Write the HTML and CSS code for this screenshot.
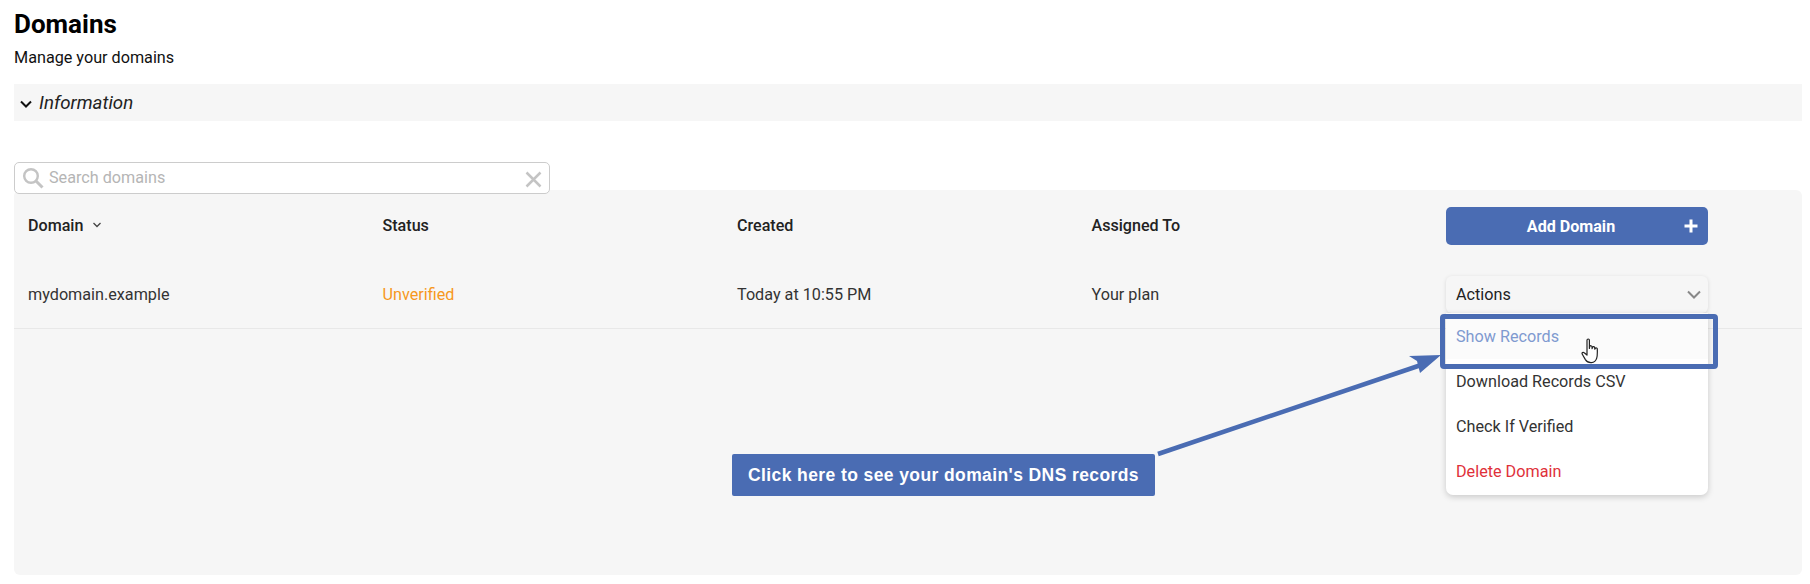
FILE: index.html
```html
<!DOCTYPE html>
<html lang="en">
<head>
<meta charset="utf-8">
<title>Domains</title>
<link rel="stylesheet" href="styles.css">
</head>
<body>
<header class="head">
  <h1 class="title">Domains</h1>
  <p class="sub">Manage your domains</p>
</header>
<div class="info">
  <svg class="info-chev" viewBox="0 0 14 10" width="14" height="10"><path d="M2 2.5 7 7.5 12 2.5" fill="none" stroke="#111" stroke-width="2"/></svg>
  <span>Information</span>
</div>
<div class="search">
  <svg class="search-ico" viewBox="0 0 22 22" width="22" height="22"><circle cx="9" cy="9" r="6.8" fill="none" stroke="#c4c4c4" stroke-width="2.4"/><path d="M14 14 20.5 20.5" stroke="#c4c4c4" stroke-width="3"/></svg>
  <span class="search-ph">Search domains</span>
  <svg class="search-x" viewBox="0 0 17 17" width="17" height="17"><path d="M1.500 1.500 15.500 15.500M15.500 1.500 1.500 15.500" stroke="#c4c4c4" stroke-width="2.500"/></svg>
</div>
<main class="panel">
  <div class="row row-head">
    <div class="cell cell-sort">Domain
      <svg class="sort" viewBox="0 0 10 6" width="10" height="6"><path d="M1.500 1 5 4.500 8.500 1" fill="none" stroke="#444" stroke-width="1.300"/></svg>
    </div>
    <div class="cell">Status</div>
    <div class="cell">Created</div>
    <div class="cell">Assigned To</div>
    <div class="cell cell-act">
      <div class="btn-add"><span class="btn-label">Add Domain</span>
        <svg viewBox="0 0 14 14" width="14" height="14"><path d="M7 .5V13.500M.5 7H13.500" stroke="#fff" stroke-width="3"/></svg>
      </div>
    </div>
  </div>
  <div class="row row-body">
    <div class="cell">mydomain.example</div>
    <div class="cell unverified">Unverified</div>
    <div class="cell">Today at 10:55 PM</div>
    <div class="cell">Your plan</div>
    <div class="cell cell-act">
      <div class="actions"><span>Actions</span>
        <svg viewBox="0 0 14 9" width="14" height="9"><path d="M1 1.500 7 7.500 13 1.500" fill="none" stroke="#888" stroke-width="2"/></svg>
      </div>
      <ul class="menu">
        <li class="item item-hover">Show Records</li>
        <li class="item">Download Records CSV</li>
        <li class="item">Check If Verified</li>
        <li class="item item-del">Delete Domain</li>
      </ul>
    </div>
  </div>
  <div class="highlight"></div>
  <svg class="cursor" viewBox="0 0 20 27" width="20" height="27"><path d="M6 2.200c0-1.600 2.400-1.600 2.400 0v8.300l.3-1.900c.3-1.300 2.200-1.100 2.300.2l.1 1.800.4-1.300c.4-1.200 2.100-.9 2.200.3l.1 1.600.5-.8c.6-.9 2-.5 2 .7 0 3.200.3 6.300-.6 9-.7 2.400-2.500 4.300-5.300 4.500-2.700.2-4.600-.8-6-3L1.300 16.200c-.8-1.300.8-2.500 1.900-1.500L6 17Z" fill="#fff" stroke="#222" stroke-width="1.200" stroke-linejoin="round"/></svg>
  <svg class="arrow" viewBox="0 0 290 110" width="290" height="110"><path d="M1 103 270 12" stroke="#4a6cb3" stroke-width="4.500" fill="none"/><path d="M284 4 252 5 260 10 263 22Z" fill="#4a6cb3"/></svg>
  <div class="callout">Click here to see your domain's DNS records</div>
</main>
</body>
</html>
```
FILE: styles.css
```css
* { box-sizing: border-box; }
html, body { margin: 0; padding: 0; }
body {
  width: 1810px;
  height: 584px;
  overflow: hidden;
  padding: 8px 8px 0 14px;
  background: #fff;
  color: #111;
  font-family: Roboto, "Liberation Sans", sans-serif;
  font-size: 16.2px;
}
.title { margin: 0; font-size: 26px; line-height: 32px; font-weight: 700; color: #000; }
.sub { margin: 8px 0 0; font-size: 16.2px; line-height: 20px; color: #111; }
.info {
  margin-top: 16px;
  height: 37px;
  background: #f6f6f6;
  display: flex;
  align-items: center;
  gap: 6px;
  padding-left: 5px;
  font-style: italic;
  font-size: 18.7px;
  color: #222;
}
.info-chev { margin-top: 3px; }
.search {
  position: relative;
  z-index: 2;
  margin-top: 41px;
  width: 536px;
  height: 32px;
  border: 1.5px solid #ccc;
  border-radius: 5px;
  background: #fff;
  display: flex;
  align-items: center;
  padding: 0 7px 0 7px;
  gap: 5px;
}
.search-ico { flex: none; }
.search-ph { flex: 1; font-size: 16.2px; color: #b5b5b5; padding-bottom: 2px; }
.search-x { margin-top: 2px; }
.panel {
  position: relative;
  margin-top: -4px;
  width: 1788px;
  height: 385px;
  background: #f6f6f6;
  border-radius: 6px;
}
.row {
  display: grid;
  grid-template-columns: repeat(4, 354.5px) 1fr;
  align-items: center;
}
.row-head { height: 70px; font-weight: 500; font-size: 16.1px; color: #222; }
.row-body { height: 69px; border-bottom: 1px solid #e8e8e8; color: #333; padding-top: 1px; }
.cell { padding-left: 14px; }
.cell-sort { display: flex; align-items: center; gap: 9px; }
.cell-act { position: relative; }
.unverified { color: #f7981d; }
.btn-add {
  width: 262px;
  height: 38px;
  margin-top: 2px;
  background: #4a6cb3;
  border-radius: 5px;
  color: #fff;
  font-weight: 700;
  display: flex;
  align-items: center;
  padding: 0 10px 0 0;
}
.btn-label { flex: 1; text-align: center; padding-left: 12px; }
.actions {
  width: 262px;
  height: 37px;
  border-radius: 6px;
  background: #f6f6f6;
  box-shadow: 0 1px 4px rgba(0,0,0,.12);
  display: flex;
  align-items: center;
  justify-content: space-between;
  padding: 0 7px 0 10px;
  color: #222;
}
.menu {
  position: absolute;
  z-index: 3;
  left: 14px;
  top: 37px;
  width: 262px;
  height: 182px;
  margin: 0;
  padding: 0;
  list-style: none;
  background: #fff;
  border-radius: 0 0 7px 7px;
  box-shadow: 0 2px 6px rgba(0,0,0,.18);
}
.item { height: 45px; padding-left: 10px; line-height: 45px; color: #333; }
.item-hover { height: 46px; line-height: 47px; background: #fbfbfb; color: #7f9ad0; }
.item-del { color: #e0303a; }
.highlight {
  position: absolute;
  z-index: 4;
  left: 1426px;
  top: 124px;
  width: 278px;
  height: 55px;
  border: 5px solid #4a6cb3;
  border-radius: 4px;
}
.cursor { position: absolute; z-index: 5; left: 1567px; top: 148px; }
.arrow { position: absolute; z-index: 5; left: 1143px; top: 161px; }
.callout {
  position: absolute;
  z-index: 5;
  left: 718px;
  top: 264px;
  width: 423px;
  height: 42px;
  background: #4a6cb3;
  border-radius: 2px;
  color: #fff;
  font-family: "Liberation Sans", Arial, sans-serif;
  font-weight: 700;
  font-size: 17.5px;
  letter-spacing: .4px;
  line-height: 42px;
  text-align: center;
}
```
